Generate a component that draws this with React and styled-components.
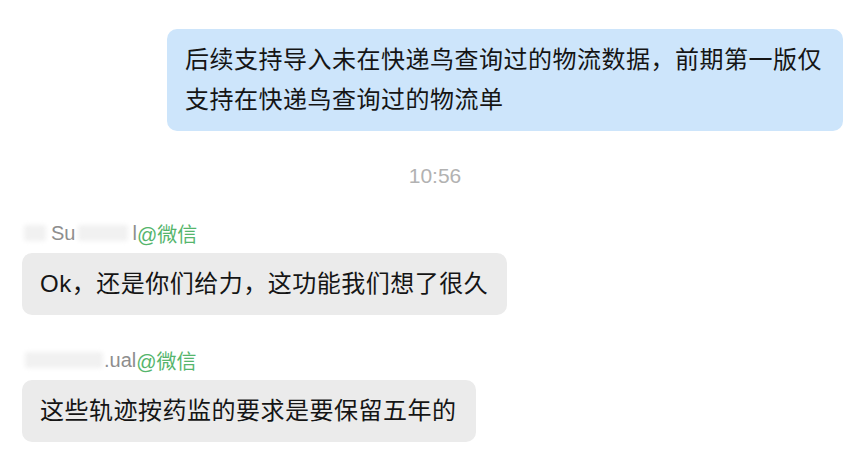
import React from "react";
import styled, { createGlobalStyle } from "styled-components";

const Global = createGlobalStyle`
  html, body { margin: 0; padding: 0; background: #ffffff; }
  body { font-family: "Liberation Sans", "Noto Sans CJK SC", sans-serif; }
`;

const Page = styled.div`
  width: 864px;
  height: 471px;
  box-sizing: border-box;
  padding: 29px 21px 0 22px;
  display: flex;
  flex-direction: column;
  gap: 33px;
  overflow: hidden;
  background: #ffffff;
`;

const Bubble = styled.div`
  box-sizing: border-box;
  max-width: ${(p) => (p.$mine ? "676px" : "820px")};
  align-self: ${(p) => (p.$mine ? "flex-end" : "flex-start")};
  padding: 11px ${(p) => (p.$mine ? "19px" : "19px")} 11px 18px;
  border-radius: 10px;
  background: ${(p) => (p.$mine ? "#cde5fb" : "#ebebeb")};
  color: #151515;
  font-family: "Liberation Sans", "Noto Sans CJK SC", sans-serif;
  font-size: 24px;
  letter-spacing: 0.5px;
  line-height: 40px;
`;

const Time = styled.div`
  text-align: center;
  font-family: "Liberation Sans", sans-serif;
  font-size: 21px;
  line-height: 24px;
  color: #b2b2b2;
  padding-left: 5px;
`;

const Group = styled.div`
  display: flex;
  flex-direction: column;
  align-items: flex-start;
  gap: 8px;
`;

const Name = styled.div`
  display: flex;
  align-items: center;
  height: 24px;
  font-family: "Liberation Sans", "Noto Sans CJK SC", sans-serif;
  font-size: 20px;
  color: #8e8e8e;
`;

const Blur = styled.span`
  display: inline-block;
  width: ${(p) => p.$w}px;
  height: 16px;
  margin-left: ${(p) => p.$ml || 0}px;
  background: #f1f1f1;
  border-radius: 3px;
  filter: blur(2px);
`;

const Plain = styled.span`
  margin-left: ${(p) => p.$ml || 0}px;
`;

const Source = styled.span`
  color: #55b56c;
`;

export default function App() {
  return (
    <>
      <Global />
      <Page>
        <Bubble $mine>
          后续支持导入未在快递鸟查询过的物流数据，前期第一版仅支持在快递鸟查询过的物流单
        </Bubble>
        <Time>10:56</Time>
        <Group>
          <Name>
            <Blur $w={22} $ml={2} />
            <Plain $ml={5}>Su</Plain>
            <Blur $w={50} $ml={3} />
            <Plain $ml={4}>l</Plain>
            <Source>@微信</Source>
          </Name>
          <Bubble>Ok，还是你们给力，这功能我们想了很久</Bubble>
        </Group>
        <Group>
          <Name>
            <Blur $w={78} $ml={3} />
            <Plain $ml={1}>.ual</Plain>
            <Source>@微信</Source>
          </Name>
          <Bubble>这些轨迹按药监的要求是要保留五年的</Bubble>
        </Group>
      </Page>
    </>
  );
}
